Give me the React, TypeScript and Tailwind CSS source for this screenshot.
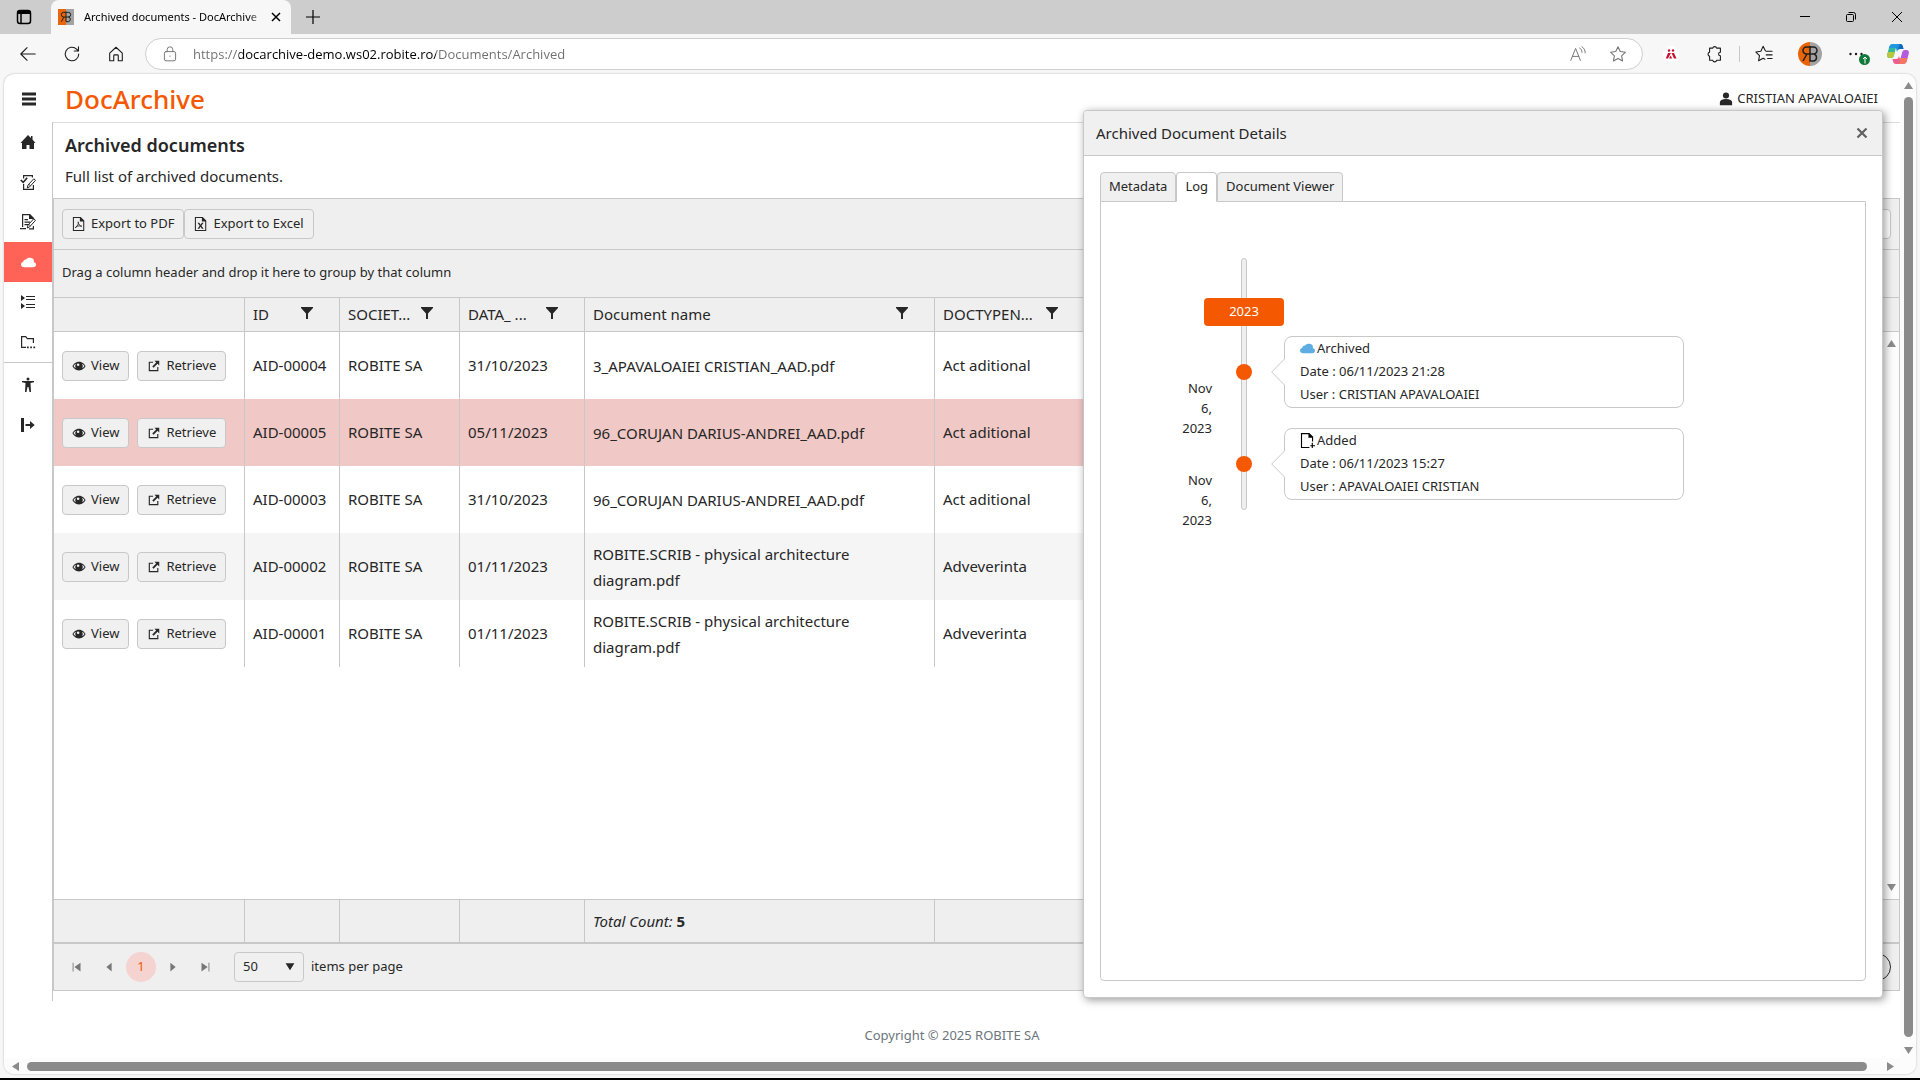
import type { ReactNode } from "react";

interface IconProps {
  className?: string;
  children?: ReactNode;
}

interface DocumentRow {
  id: string;
  company: string;
  date: string;
  name: string;
  type: string;
}

interface LogEntry {
  action: "Archived" | "Added";
  day: string;
  date: string;
  user: string;
}

const rows: DocumentRow[] = [
  { id: "AID-00004", company: "ROBITE SA", date: "31/10/2023", name: "3_APAVALOAIEI CRISTIAN_AAD.pdf", type: "Act aditional" },
  { id: "AID-00005", company: "ROBITE SA", date: "05/11/2023", name: "96_CORUJAN DARIUS-ANDREI_AAD.pdf", type: "Act aditional" },
  { id: "AID-00003", company: "ROBITE SA", date: "31/10/2023", name: "96_CORUJAN DARIUS-ANDREI_AAD.pdf", type: "Act aditional" },
  { id: "AID-00002", company: "ROBITE SA", date: "01/11/2023", name: "ROBITE.SCRIB - physical architecture diagram.pdf", type: "Adveverinta" },
  { id: "AID-00001", company: "ROBITE SA", date: "01/11/2023", name: "ROBITE.SCRIB - physical architecture diagram.pdf", type: "Adveverinta" },
];

const rowColors = ["bg-white", "bg-[#f0c8c6]", "bg-white", "bg-[#f5f5f5]", "bg-white"];

const headers = ["ID", "SOCIET...", "DATA_ ...", "Document name", "DOCTYPEN..."];

const log: LogEntry[] = [
  { action: "Archived", day: "Nov 6, 2023", date: "06/11/2023 21:28", user: "CRISTIAN APAVALOAIEI" },
  { action: "Added", day: "Nov 6, 2023", date: "06/11/2023 15:27", user: "APAVALOAIEI CRISTIAN" },
];

const Icon = ({ className = "size-4", children }: IconProps) => (
  <svg viewBox="0 0 16 16" className={className} fill="currentColor" aria-hidden="true">
    {children}
  </svg>
);

const LineIcon = ({ className = "size-5", children }: IconProps) => (
  <svg
    viewBox="0 0 20 20"
    className={className}
    fill="none"
    stroke="currentColor"
    strokeWidth="1.2"
    strokeLinecap="round"
    strokeLinejoin="round"
    aria-hidden="true"
  >
    {children}
  </svg>
);

const CloudIcon = ({ className }: IconProps) => (
  <Icon className={className}>
    <path d="M3.5 13C1.4 13 0 11.8 0 10c0-1.500 1-2.400 2.300-2.600C2.500 5.500 3.800 4.500 5.400 4.700 6.200 3.600 7.700 3 9.500 3c2.400 0 4 1 4.200 3 .1.800.1 1.300 0 1.700C15.200 8 16 9 16 10.300 16 12 14.800 13 13 13z" />
  </Icon>
);

const FilterIcon = () => (
  <Icon className="size-4">
    <path d="M2 2h12v1L9 8.500V14H7V8.500L2 3z" />
  </Icon>
);

const EyeIcon = () => (
  <Icon className="size-3.5">
    <path
      fillRule="evenodd"
      d="M8 3C4 3 1.500 6 .5 8c1 2 3.500 5 7.500 5s6.500-3 7.500-5C14.500 6 12 3 8 3zM4.800 5.300a4.200 4.200 0 0 0 0 5.400C3.300 10 2.200 8.900 1.700 8c.5-.9 1.600-2 3.100-2.700zm6.400 0c1.500.7 2.600 1.800 3.100 2.700-.5.900-1.600 2-3.100 2.700a4.200 4.200 0 0 0 0-5.400zM7 5a1.500 1.500 0 1 1 0 3 1.500 1.500 0 0 1 0-3z"
    />
  </Icon>
);

const OpenIcon = () => (
  <Icon className="size-3.5">
    <path d="M2 3h5v1.300H3.300v8.400h8.400V9H13v5H2zM8.500 2H14v5.500l-2-2L7.500 10 6 8.500 10.500 4z" />
  </Icon>
);

const FileIcon = ({ kind }: { kind: "pdf" | "excel" }) => (
  <Icon className="size-3.5">
    <path fillRule="evenodd" d="M1 0h9l4 4v12H1zm1.200 1.200v13.600h10.600V5H9V1.200z" />
    {kind === "pdf" ? (
      <path
        fill="none"
        stroke="currentColor"
        d="M7 5.500c1 1-.2 4.500-3.200 7C4 10.500 8 9.500 11.200 10.500 9.500 11 7 8 7 5.500z"
      />
    ) : (
      <path d="M4 6.500h2l1.500 2.300L9 6.500h2L8.500 10l2.500 3.500H9l-1.500-2.300L6 13.500H4L6.500 10z" />
    )}
  </Icon>
);

const PencilPath = () => (
  <path
    fill="white"
    stroke="currentColor"
    strokeWidth="1"
    d="M7.300 14l.7-3 5.800-6.200 1.700 1.500L9.800 12.700zM9 10.500l1.400 1.300"
  />
);

const BrandMark = ({ className }: IconProps) => (
  <svg viewBox="0 0 24 24" className={className} aria-hidden="true">
    <rect width="12" height="24" fill="#e8650a" />
    <rect x="12" width="12" height="24" fill="#a3a3a3" />
    <g fill="none" stroke="#1f1f1f" strokeWidth="1.500">
      <path d="M12 5H8.500a3.500 3.500 0 0 0 0 7H12M9 12l-4 7M12 4v15h4a3.700 3.700 0 0 0 0-7h-4M12 5h3.500a3.500 3.500 0 0 1 0 7" />
    </g>
  </svg>
);

const TitleBar = () => (
  <div className="flex h-[34px] bg-[#cdcdcd] text-black">
    <button aria-label="Tab actions" className="flex w-12 items-center justify-center">
      <svg viewBox="0 0 16 16" className="size-4" fill="none" stroke="currentColor" strokeWidth="1.500">
        <rect x="1.500" y="1.500" width="13" height="13" rx="2.500" />
        <path d="M1.500 3.500h13M5 5v9.500" />
        <path strokeWidth="3" d="M2 3.500h12" />
      </svg>
    </button>
    <div className="ml-[3px] flex w-60 items-center rounded-t-lg bg-[#f7f7f7] pl-[7px]">
      <BrandMark className="size-4" />
      <span className="ml-2.5 w-[182px] overflow-hidden text-[11px] whitespace-nowrap mask-r-from-90%">
        Archived documents - DocArchive
      </span>
      <button aria-label="Close tab" className="flex size-5 items-center justify-center">
        <svg viewBox="0 0 10 10" className="size-2.5" stroke="currentColor" strokeWidth="1.500">
          <path d="M1 1l8 8M9 1L1 9" />
        </svg>
      </button>
    </div>
    <button aria-label="New tab" className="flex w-11 items-center justify-center">
      <svg viewBox="0 0 14 14" className="size-3.5" stroke="currentColor" strokeWidth="1.200">
        <path d="M7 0v14M0 7h14" />
      </svg>
    </button>
    <div className="ml-auto flex">
      <button aria-label="Minimize" className="flex w-[46px] items-center justify-center">
        <svg viewBox="0 0 10 10" className="size-2.5" stroke="currentColor">
          <path d="M0 4.500h10" />
        </svg>
      </button>
      <button aria-label="Restore" className="flex w-[46px] items-center justify-center">
        <svg viewBox="0 0 10 10" className="size-2.5" fill="none" stroke="currentColor">
          <rect x=".5" y="2.500" width="7" height="7" rx="1" />
          <path d="M2.500.5h5a2 2 0 0 1 2 2v5" />
        </svg>
      </button>
      <button aria-label="Close window" className="flex w-[46px] items-center justify-center">
        <svg viewBox="0 0 10 10" className="size-2.5" stroke="currentColor">
          <path d="M0 0l10 10M10 0L0 10" />
        </svg>
      </button>
    </div>
  </div>
);

const ToolButton = ({ label, children }: { label: string; children: ReactNode }) => (
  <button aria-label={label} className="flex w-11 shrink-0 items-center justify-center">
    {children}
  </button>
);

const AddressBar = () => (
  <div className="flex h-10 items-stretch pr-0.5 pl-1.5 text-[#1a1a1a]">
    <ToolButton label="Back">
      <LineIcon className="size-[18px]">
        <path d="M18 10H2.500M9 3l-7 7 7 7" />
      </LineIcon>
    </ToolButton>
    <ToolButton label="Refresh">
      <LineIcon className="size-[18px]">
        <path d="M17.500 10a7.500 7.500 0 1 1-2.400-5.500L17 6.500M17.200 2v4.700h-4.700" />
      </LineIcon>
    </ToolButton>
    <ToolButton label="Home">
      <LineIcon className="size-[18px]">
        <path d="M3 9l7-6.500L17 9v8.500h-4.500V12a1 1 0 0 0-1-1h-3a1 1 0 0 0-1 1v5.500H3z" />
      </LineIcon>
    </ToolButton>
    <div className="my-1 ml-[7px] flex flex-1 items-center rounded-full border border-[#cfcfcf] bg-white pl-4 text-[#757575]">
      <LineIcon className="size-4">
        <rect x="3" y="7" width="14" height="11.500" rx="2" />
        <path d="M6.500 7V4.500a3.500 3.500 0 0 1 7 0V7M10 12.500v.5" />
      </LineIcon>
      <input
        aria-label="Address"
        type="text"
        defaultValue="https://docarchive-demo.ws02.robite.ro/Documents/Archived"
        className="ml-[15px] h-full min-w-0 flex-1 bg-[linear-gradient(90deg,#6e6e6e_46px,#000000_46px,#000000_243px,#6e6e6e_243px)] bg-clip-text font-['Open_Sans',sans-serif] text-[13px] text-transparent outline-none"
      />
      <button aria-label="Read aloud" className="flex w-10 justify-center">
        <LineIcon className="size-4">
          <path d="M1 18L7 3l6 15M3 13h8M12 2.500c2 1 3 3 3 5.500M15 1c2.500 1.500 4 4 4 7.500" />
        </LineIcon>
      </button>
      <button aria-label="Add to favorites" className="mr-1 flex w-10 justify-center">
        <LineIcon className="size-[18px]">
          <path d="M10 2l2.500 5.300 5.800.7-4.300 4 1.100 5.700L10 14.900l-5.100 2.800L6 12 1.700 8l5.800-.7z" />
        </LineIcon>
      </button>
    </div>
    <span className="w-1.5" />
    <ToolButton label="Extension">
      <svg viewBox="0 0 16 16" className="size-4 rounded-full bg-white" fill="#c8102e">
        <circle cx="6" cy="4.500" r="1.200" />
        <circle cx="10" cy="4.500" r="1.200" />
        <path d="M5 7h3l-3 5.500H2.800zM8.500 7H11l2.500 5.500H11z" />
        <path d="M7.500 9.500l1.800 3H6z" />
      </svg>
    </ToolButton>
    <ToolButton label="Extensions">
      <LineIcon className="size-[18px]">
        <path d="M4 3.500h3.500a2.200 2.200 0 0 1 4.300 0H16V8a2 2 0 0 0 0 4v5h-4.200a2.200 2.200 0 0 1-4.300 0H4v-4.500a2.400 2.400 0 0 1 0-4.600z" />
      </LineIcon>
    </ToolButton>
    <span className="mx-0.5 my-3 w-px bg-[#c8c8c8]" />
    <ToolButton label="Favorites">
      <LineIcon className="size-[18px]">
        <path d="M11.500 6.500L9 1.500 6.500 7 1 7.800l4 4L4 17.500l5-2.700 2 1M12.500 7H19M12.500 11H19M14 15h5" />
      </LineIcon>
    </ToolButton>
    <button aria-label="Profile" className="flex w-12 shrink-0 items-center justify-center">
      <BrandMark className="size-6 rounded-full" />
    </button>
    <button aria-label="Settings and more" className="relative flex w-11 shrink-0 items-center justify-center">
      <Icon className="size-4">
        <circle cx="2.500" cy="8" r="1.200" />
        <circle cx="8" cy="8" r="1.200" />
        <circle cx="13.500" cy="8" r="1.200" />
      </Icon>
      <span className="absolute top-5 right-2 flex size-[11px] items-center justify-center rounded-full bg-[#0f7b3a] text-white">
        <svg viewBox="0 0 8 8" className="size-2" fill="none" stroke="currentColor">
          <path d="M4 7.500V1M2 3l2-2 2 2" />
        </svg>
      </span>
    </button>
    <button aria-label="Copilot" className="flex w-10 shrink-0 items-center justify-center">
      <svg viewBox="0 0 22 20" className="h-5 w-[22px]">
        <path fill="#1f8fe0" d="M5 0h8c2 0 2.500 1 3 3l.5 2H13c-2 0-2.500 1-3 3L8 0z" />
        <path fill="#1468b8" d="M13 0c2 0 2.500 1 3 3l.5 2H13c-1 0-1.700.3-2.200 1z" />
        <path fill="#35b79a" d="M6 0h4L7 11c-.5 2-1.200 3-3 3H2.500C.5 14-.3 12.500.2 10.500l2-7.500C2.800 1 4 0 6 0z" />
        <path fill="#2196e3" d="M6 0h4L8.900 4H1.900l.3-1C2.800 1 4 0 6 0z" />
        <path fill="#b7c83a" d="M1 8h7l-1 3c-.5 2-1.200 3-3 3H2.500C.5 14-.3 12.500.2 10.500z" />
        <path fill="#ee5d8c" d="M16 20H9c-2 0-2.500-1-3-3l-.5-2H9c2 0 2.500-1 3-3l1 3z" />
        <path fill="#b45be0" d="M16 20h-4l3-11c.5-2 1.200-3 3-3h1.500c2 0 2.800 1.500 2.300 3.500l-2 7.500c-.6 2-1.800 3-3.800 3z" />
        <path fill="#f6765f" d="M16 20h-4l1.500-6h7l-.7 3c-.6 2-1.800 3-3.800 3z" />
      </svg>
    </button>
  </div>
);

const SidebarLink = ({ label, active, children }: { label: string; active?: boolean; children: ReactNode }) => (
  <a
    href="#"
    aria-label={label}
    className={
      active
        ? "flex h-10 items-center justify-center bg-[#ff6358] text-white"
        : "flex h-10 items-center justify-center text-[#272727]"
    }
  >
    {children}
  </a>
);

const Sidebar = () => (
  <nav className="w-[49px] shrink-0 border-r border-[#c8c8c8]">
    <SidebarLink label="Home">
      <Icon>
        <path d="M8 1l3 3V2h1.500v3.500L15.500 9H14v6H9.500v-4h-3v4H2V9H.5z" />
      </Icon>
    </SidebarLink>
    <SidebarLink label="Tasks">
      <Icon>
        <path d="M3 4.500V1h10v2.500h-1.200V2.200H4.200V4.500zM3 10h1.200v4.800h8.600V11H14v5H3z" />
        <path d="M.2 6.500l1.300-1 1.700 1.700 3.300-4 1.300 1L3.300 9.500z" />
        <PencilPath />
      </Icon>
    </SidebarLink>
    <SidebarLink label="Requests">
      <Icon>
        <path d="M2 0h8l4 4v2h-1.200V5H9V1.200H3.200V13H2zM0 14h6v1.200H0zM4.500 5H8v1.200H4.500zM4.500 7.500H10v1.200H4.500zM4.500 10H8v1.200H4.500zM12.800 12H14v3.500H9v-1.200h3.800z" />
        <PencilPath />
      </Icon>
    </SidebarLink>
    <SidebarLink label="Archived documents" active>
      <CloudIcon className="size-[15px]" />
    </SidebarLink>
    <SidebarLink label="Nomenclatures">
      <Icon>
        <path d="M1 1l4 3-4 3zM1 9l4 3-4 3zM6 2h9v1H6zM6 5h9v1H6zM6 10h9v1H6zM6 13h9v1H6z" />
      </Icon>
    </SidebarLink>
    <SidebarLink label="Folders">
      <Icon>
        <path d="M1 2h5l1.500 2H14v5h-1.200V5.200H7L5.500 3.200H2.200v9.600H6V14H1zM7 12.500h1.700v1.700H7zM10.200 12.500h1.700v1.700h-1.700zM13.400 12.500h1.700v1.700h-1.700z" />
      </Icon>
    </SidebarLink>
    <hr className="mb-0.5 border-[#c8c8c8]" />
    <SidebarLink label="Accessibility">
      <Icon>
        <circle cx="8" cy="2" r="1.500" />
        <path d="M2 4h12v1.300l-3.500.6L11 15H9.500l-1-5h-1l-1 5H5l.5-9.100L2 5.300z" />
      </Icon>
    </SidebarLink>
    <SidebarLink label="Log out">
      <Icon>
        <path d="M1 1h3v14H1zM5.500 7H10V4l4.700 4L10 12V9H5.500z" />
      </Icon>
    </SidebarLink>
  </nav>
);

const GridColumns = () => (
  <colgroup>
    <col className="w-[190px]" />
    <col className="w-[95px]" />
    <col className="w-[120px]" />
    <col className="w-[125px]" />
    <col className="w-[350px]" />
    <col className="w-[150px]" />
    <col />
  </colgroup>
);

const GridButton = ({ children }: { children: ReactNode }) => (
  <button className="inline-flex h-[30px] items-center gap-[5px] rounded border border-[#c8c8c8] bg-[#f0f0f0] px-[9px] text-[13px]">
    {children}
  </button>
);

const Grid = () => (
  <section className="flex flex-1 flex-col border border-[#c8c8c8]">
    <div className="flex h-[51px] items-center border-b border-[#c8c8c8] bg-[#efefef] px-2">
      <GridButton>
        <FileIcon kind="pdf" />
        Export to PDF
      </GridButton>
      <GridButton>
        <FileIcon kind="excel" />
        Export to Excel
      </GridButton>
      <input
        type="search"
        aria-label="Search"
        className="ml-auto h-[30px] w-60 rounded border border-[#c8c8c8] bg-white"
      />
    </div>
    <div className="flex h-12 items-center border-b border-[#c8c8c8] bg-[#efefef] px-2 pb-0.5 text-[13px]">
      Drag a column header and drop it here to group by that column
    </div>
    <div className="flex flex-1">
      <div className="flex-1">
        <table className="w-full table-fixed border-separate border-spacing-0 text-left text-[15px]">
          <GridColumns />
          <thead>
            <tr className="h-[34px] bg-[#efefef]">
              <th aria-label="Actions" className="border-b border-[#c8c8c8]" />
              {headers.map((title) => (
                <th key={title} className="border-b border-l border-[#c8c8c8] p-0 pl-2 font-normal">
                  <div className="flex items-center justify-between pr-6">
                    <span className="whitespace-nowrap">{title}</span>
                    <button aria-label="Filter" className="-ml-1 pb-1">
                      <FilterIcon />
                    </button>
                  </div>
                </th>
              ))}
              <th aria-label="More" className="border-x border-b border-[#c8c8c8]" />
            </tr>
          </thead>
          <tbody>
            {rows.map((row, i) => (
              <tr key={row.id} className={rowColors[i]}>
                <td className="h-[67px] px-2">
                  <div className="flex gap-2">
                    <GridButton>
                      <EyeIcon />
                      View
                    </GridButton>
                    <GridButton>
                      <OpenIcon />
                      Retrieve
                    </GridButton>
                  </div>
                </td>
                <td className="border-l border-[#c8c8c8] pl-2 whitespace-nowrap">{row.id}</td>
                <td className="border-l border-[#c8c8c8] px-2">{row.company}</td>
                <td className="border-l border-[#c8c8c8] px-2">{row.date}</td>
                <td className="border-l border-[#c8c8c8] px-2 leading-[26px]">{row.name}</td>
                <td className="border-l border-[#c8c8c8] px-2">{row.type}</td>
                <td className="border-l border-[#c8c8c8]" />
              </tr>
            ))}
          </tbody>
        </table>
      </div>
      <div className="flex w-4 flex-col bg-[#fcfcfc] text-[#8b8b8b]">
        <div className="h-[34px] border-b border-[#c8c8c8] bg-[#efefef]" />
        <div className="flex flex-1 flex-col items-center justify-between py-2">
          <svg viewBox="0 0 9 7" className="h-[7px] w-[9px]" fill="currentColor">
            <path d="M4.500 0L9 7H0z" />
          </svg>
          <svg viewBox="0 0 9 7" className="h-[7px] w-[9px]" fill="currentColor">
            <path d="M4.500 7L9 0H0z" />
          </svg>
        </div>
      </div>
    </div>
    <div className="flex border-t border-b-2 border-[#c8c8c8] bg-[#efefef]">
      <table className="flex-1 table-fixed border-separate border-spacing-0 text-[15px]">
        <GridColumns />
        <tbody>
          <tr className="h-[42px]">
            <td />
            <td className="border-l border-[#c8c8c8]" />
            <td className="border-l border-[#c8c8c8]" />
            <td className="border-l border-[#c8c8c8]" />
            <td className="border-l border-[#c8c8c8] px-2">
              <em>Total Count:</em> <b>5</b>
            </td>
            <td className="border-l border-[#c8c8c8]" />
            <td className="border-x border-[#c8c8c8]" />
          </tr>
        </tbody>
      </table>
      <div className="w-4" />
    </div>
    <div className="flex h-[46px] items-center bg-[#efefef] px-2 text-[13px]">
      <button aria-label="First page" className="flex size-[30px] items-center justify-center text-[#777]">
        <Icon className="size-3.5">
          <path d="M3 3h1v10H3zM12 3v10L5 8z" />
        </Icon>
      </button>
      <button aria-label="Previous page" className="ml-0.5 flex size-[30px] items-center justify-center text-[#777]">
        <Icon className="size-3.5">
          <path d="M11 3v10L5 8z" />
        </Icon>
      </button>
      <button className="ml-0.5 size-[30px] rounded-full bg-[#f4d3d1] text-[#f45800]">1</button>
      <button aria-label="Next page" className="ml-0.5 flex size-[30px] items-center justify-center text-[#777]">
        <Icon className="size-3.5">
          <path d="M5 3v10l6-5z" />
        </Icon>
      </button>
      <button aria-label="Last page" className="ml-0.5 flex size-[30px] items-center justify-center text-[#777]">
        <Icon className="size-3.5">
          <path d="M12 3h1v10h-1zM4 3v10l7-5z" />
        </Icon>
      </button>
      <div className="relative ml-3.5">
        <select
          id="page-size"
          defaultValue="50"
          className="h-[30px] w-[70px] appearance-none rounded border border-[#c8c8c8] bg-[#f0f0f0] pl-2"
        >
          <option value="50">50</option>
          <option value="100">100</option>
        </select>
        <Icon className="pointer-events-none absolute top-2.5 right-[9px] size-2.5">
          <path d="M1 2h14L8 13z" />
        </Icon>
      </div>
      <label htmlFor="page-size" className="ml-[7px]">
        items per page
      </label>
      <button aria-label="Refresh" className="ml-auto size-7 rounded-full border border-[#272727]" />
    </div>
  </section>
);

const Timeline = () => (
  <div className="relative mt-14 pb-2.5 text-[13px]">
    <div className="absolute inset-y-0 left-[140px] w-1.5 rounded-full border border-[#c8c8c8] bg-[#efefef]" />
    <div className="pt-10">
      <div className="relative ml-[103px] flex h-7 w-20 items-center justify-center rounded bg-[#f45800] text-white">
        2023
      </div>
    </div>
    <ul className="flex flex-col gap-5 pt-2.5">
      {log.map((entry) => (
        <li key={entry.date} className="flex h-[72px] items-start">
          <div className="ml-[77px] w-[34px] pt-[42px] text-right leading-5">{entry.day}</div>
          <span className="relative ml-6 size-4 self-center rounded-full bg-[#f45800]" />
          <div className="relative ml-8 h-full w-[400px] rounded-lg border border-[#c8c8c8] bg-white pl-[15px] leading-[23px]">
            <svg viewBox="0 0 15 30" className="absolute top-5 -left-3.5 h-[30px] w-[15px]" fill="white" stroke="#c8c8c8">
              <path stroke="none" d="M15 1L1 15l14 14z" />
              <path d="M14 1.500L.7 15 14 28.500" />
            </svg>
            <p className="flex items-center gap-0.5">
              {entry.action === "Archived" ? (
                <CloudIcon className="size-[15px] text-[#5dade2]" />
              ) : (
                <Icon className="size-[15px] text-black">
                  <path
                    fillRule="evenodd"
                    d="M1 0h9l4 4v5h-1.200V5H9V1.200H2.200v13.600H10V16H1zM12.500 10.500h1.200V13H16v1.200h-2.300V16h-1.200v-1.800H11V13h1.500z"
                  />
                </Icon>
              )}
              {entry.action}
            </p>
            <p>Date : {entry.date}</p>
            <p>User : {entry.user}</p>
          </div>
        </li>
      ))}
    </ul>
  </div>
);

const DetailsWindow = () => (
  <div
    role="dialog"
    aria-labelledby="details-title"
    className="absolute top-9 right-[33px] bottom-[76px] flex w-[800px] flex-col rounded border border-[#c8c8c8] bg-white shadow-[2px_2px_8px_rgba(0,0,0,0.4)]"
  >
    <div className="flex h-[45px] items-center justify-between rounded-t border-b border-[#c8c8c8] bg-[#f0f0f0] pr-3.5 pl-3">
      <h2 id="details-title" className="text-[15px]">
        Archived Document Details
      </h2>
      <button aria-label="Close" className="text-[#606060]">
        <svg viewBox="0 0 12 12" className="size-3" stroke="currentColor" strokeWidth="2.200">
          <path d="M1.500 1.500l9 9M10.500 1.500l-9 9" />
        </svg>
      </button>
    </div>
    <div className="flex flex-1 flex-col p-4">
      <div role="tablist" className="relative -mb-px flex text-[13px]">
        <button
          role="tab"
          aria-selected="false"
          className="h-[30px] rounded-t border border-[#c8c8c8] bg-[#f0f0f0] px-2"
        >
          Metadata
        </button>
        <button
          role="tab"
          aria-selected="true"
          className="h-[30px] rounded-t border border-[#c8c8c8] border-b-white bg-white px-2"
        >
          Log
        </button>
        <button
          role="tab"
          aria-selected="false"
          className="h-[30px] rounded-t border border-[#c8c8c8] bg-[#f0f0f0] px-2"
        >
          Document Viewer
        </button>
      </div>
      <div role="tabpanel" className="flex-1 rounded-b border border-[#c8c8c8]">
        <Timeline />
      </div>
    </div>
  </div>
);

const App = () => {
  return (
    <div className="flex min-h-screen flex-col border-b-2 border-black bg-[#f7f7f7] font-['Noto_Sans','Open_Sans',sans-serif] text-[#272727]">
      <TitleBar />
      <AddressBar />
      <div className="relative mx-1 mb-1 flex flex-1 flex-col rounded-[10px] bg-white shadow-[0_0_2px_rgba(0,0,0,0.3)]">
        <div className="flex flex-1">
          <div className="flex flex-1 flex-col">
            <header className="flex h-12 items-center pt-0.5">
              <button aria-label="Menu" className="flex w-[49px] justify-center">
                <Icon className="size-4">
                  <path d="M1 1.500h14v3H1zM1 6.500h14v3H1zM1 11.500h14v3H1z" />
                </Icon>
              </button>
              <h1 className="pl-3 text-[26px] font-medium text-[#f45800]">DocArchive</h1>
              <a href="#" className="mr-[22px] ml-auto flex items-center gap-1 text-[13px]">
                <Icon className="size-3.5">
                  <circle cx="8" cy="4" r="3.500" />
                  <path d="M1 15v-3c0-2.500 2.500-4 7-4s7 1.500 7 4v3z" />
                </Icon>
                CRISTIAN APAVALOAIEI
              </a>
            </header>
            <div className="flex flex-1">
              <Sidebar />
              <main className="flex flex-1 flex-col border-t border-[#dcdcdc] pb-2.5">
                <div className="h-[75px] pt-1.5 pl-3">
                  <h2 className="text-[18px] leading-8 font-semibold">Archived documents</h2>
                  <p className="text-[15px] leading-[30px]">Full list of archived documents.</p>
                </div>
                <Grid />
              </main>
            </div>
            <footer className="h-[57px] pt-6 text-center text-[13px] leading-5 text-[#6c757d]">
              Copyright © 2025 ROBITE SA
            </footer>
          </div>
          <div className="flex w-4 flex-col items-center rounded-tr-[10px] bg-[#fcfcfc] pt-2 pb-1 text-[#8b8b8b]">
            <svg viewBox="0 0 9 7" className="h-[7px] w-[9px]" fill="currentColor">
              <path d="M4.500 0L9 7H0z" />
            </svg>
            <div className="mt-2 mb-2.5 w-[9px] flex-1 rounded-full bg-current" />
            <svg viewBox="0 0 9 7" className="h-[7px] w-[9px]" fill="currentColor">
              <path d="M4.500 7L9 0H0z" />
            </svg>
          </div>
        </div>
        <div className="flex h-4 items-center rounded-b-[10px] bg-[#fcfcfc] pr-[22px] pl-2 text-[#8b8b8b]">
          <svg viewBox="0 0 7 9" className="h-[9px] w-[7px]" fill="currentColor">
            <path d="M0 4.500L7 0v9z" />
          </svg>
          <div className="mr-5 ml-2 h-[9px] flex-1 rounded-full bg-current" />
          <svg viewBox="0 0 7 9" className="h-[9px] w-[7px]" fill="currentColor">
            <path d="M7 4.500L0 0v9z" />
          </svg>
        </div>
        <DetailsWindow />
      </div>
    </div>
  );
};

export default App;
